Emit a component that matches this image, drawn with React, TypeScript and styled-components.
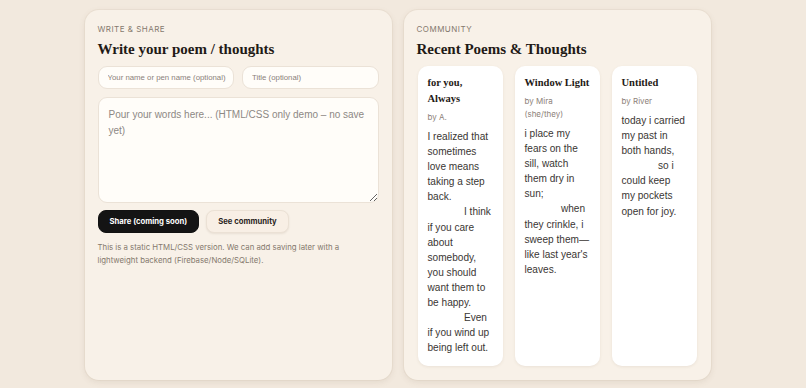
import styled, { createGlobalStyle } from "styled-components";

const GlobalStyle = createGlobalStyle`
  body {
    margin: 0;
    padding-right: 11px;
    background: #f2e9de;
    font-family: Inter, "Liberation Sans", sans-serif;
    color: #2a2522;
  }
  * {
    box-sizing: border-box;
  }
`;

const Page = styled.main`
  display: grid;
  grid-template-columns: minmax(0, 1fr) minmax(0, 1fr);
  gap: 12px;
  width: 626px;
  margin: 0 auto;
  padding: 10px 0 8px;
`;

const Panel = styled.section`
  background: #f8f1e8;
  border-radius: 14px;
  padding: 13px 13px 14px;
  box-shadow: 0 2px 6px rgba(120, 95, 70, 0.12), 0 0 0 1px rgba(150, 120, 90, 0.06);
  height: 370px;
  display: flex;
  flex-direction: column;
  min-width: 0;
`;

const Eyebrow = styled.div`
  font-size: 8px;
  line-height: 12px;
  letter-spacing: 0.06em;
  text-transform: uppercase;
  color: #85796e;
`;

const Heading = styled.h2`
  margin: 4px 0 7px;
  font-family: "Liberation Serif", "DejaVu Serif", serif;
  font-size: 15px;
  line-height: 20px;
  font-weight: 700;
  color: #1f1a16;
`;

const FieldRow = styled.div`
  display: grid;
  grid-template-columns: minmax(0, 1fr) minmax(0, 1fr);
  gap: 8px;
`;

const Input = styled.input`
  width: 100%;
  min-width: 0;
  height: 23px;
  border: 1px solid #ebe2d7;
  border-radius: 9px;
  background: #fffdf9;
  padding: 0 6px 0 9px;
  font-family: "Liberation Sans", Arial, sans-serif;
  font-size: 7.8px;
  color: #2a2522;
  outline: none;

  &::placeholder {
    color: #8b8179;
  }
`;

const TextArea = styled.textarea`
  width: 100%;
  margin-top: 8px;
  height: 106px;
  border: 1px solid #ebe2d7;
  border-radius: 9px;
  background: #fffdf9;
  padding: 9px 10px;
  font-family: "Liberation Sans", Arial, sans-serif;
  font-size: 10px;
  line-height: 16px;
  color: #2a2522;
  outline: none;
  resize: vertical;

  &::placeholder {
    color: #8d8884;
  }
`;

const Actions = styled.div`
  display: flex;
  gap: 7px;
  margin-top: 7px;
`;

const Button = styled.button<{ $dark?: boolean }>`
  height: 23px;
  padding: 0 11px;
  border-radius: 8px;
  font-family: inherit;
  font-size: 7.7px;
  font-weight: 700;
  cursor: pointer;
  border: 1px solid ${(p) => (p.$dark ? "#121212" : "#ebe1d5")};
  background: ${(p) => (p.$dark ? "#141414" : "#f8efe5")};
  color: ${(p) => (p.$dark ? "#ffffff" : "#2a2522")};
  box-shadow: ${(p) => (p.$dark ? "none" : "0 1px 2px rgba(120, 95, 70, 0.12)")};
`;

const Note = styled.p`
  margin: 8px 0 0;
  font-size: 7.8px;
  line-height: 13px;
  color: #85796e;
`;

const PoemGrid = styled.div`
  flex: 1;
  display: grid;
  grid-template-columns: repeat(3, minmax(0, 1fr));
  gap: 12px;
  padding: 0 1px;
  min-height: 0;
`;

const PoemCard = styled.article`
  background: #ffffff;
  border-radius: 10px;
  padding: 9px 10px;
  box-shadow: 0 1px 3px rgba(120, 95, 70, 0.1);
`;

const PoemTitle = styled.h3`
  margin: 0;
  font-family: "Liberation Serif", "DejaVu Serif", serif;
  font-size: 10.5px;
  font-weight: 700;
  line-height: 16px;
  color: #1f1a16;
`;

const Author = styled.div`
  margin-top: 4px;
  font-size: 8px;
  line-height: 13px;
  color: #8d8179;
`;

const PoemBody = styled.p`
  margin: 5px 0 0;
  white-space: pre-wrap;
  font-family: "Liberation Sans", Arial, sans-serif;
  font-size: 10.1px;
  line-height: 15.1px;
  color: #3a3633;
`;

const indent = "\n             ";

const poems = [
  {
    title: "for you, Always",
    author: "A.",
    body: `I realized that sometimes love means taking a step back.${indent}I think if you care about somebody, you should want them to be happy.${indent}Even if you wind up being left out.`,
  },
  {
    title: "Window Light",
    author: "Mira (she/they)",
    body: `i place my fears on the sill, watch them dry in sun;${indent}when they crinkle, i sweep them—like last year's leaves.`,
  },
  {
    title: "Untitled",
    author: "River",
    body: `today i carried my past in both hands,${indent}so i could keep my pockets open for joy.`,
  },
];

export default function App() {
  return (
    <>
      <GlobalStyle />
      <Page>
        <Panel>
          <Eyebrow>Write &amp; Share</Eyebrow>
          <Heading>Write your poem / thoughts</Heading>
          <FieldRow>
            <Input placeholder="Your name or pen name (optional)" />
            <Input placeholder="Title (optional)" />
          </FieldRow>
          <TextArea placeholder="Pour your words here... (HTML/CSS only demo – no save yet)" />
          <Actions>
            <Button $dark>Share (coming soon)</Button>
            <Button>See community</Button>
          </Actions>
          <Note>
            This is a static HTML/CSS version. We can add saving later with a lightweight backend
            (Firebase/Node/SQLite).
          </Note>
        </Panel>
        <Panel>
          <Eyebrow>Community</Eyebrow>
          <Heading>Recent Poems &amp; Thoughts</Heading>
          <PoemGrid>
            {poems.map((poem) => (
              <PoemCard key={poem.title}>
                <PoemTitle>{poem.title}</PoemTitle>
                <Author>by {poem.author}</Author>
                <PoemBody>{poem.body}</PoemBody>
              </PoemCard>
            ))}
          </PoemGrid>
        </Panel>
      </Page>
    </>
  );
}
